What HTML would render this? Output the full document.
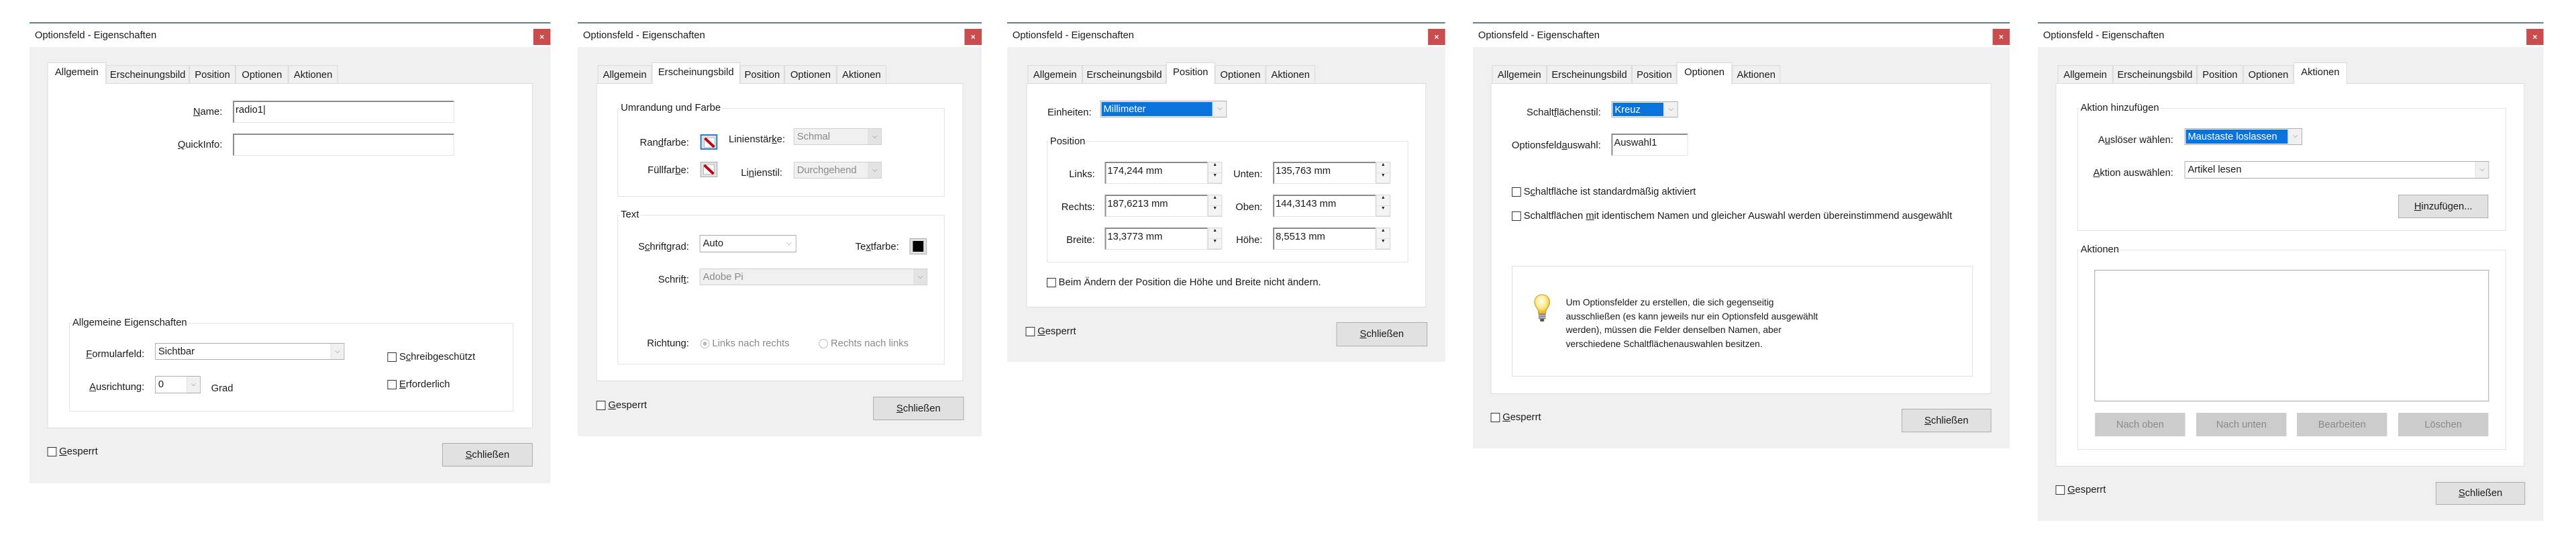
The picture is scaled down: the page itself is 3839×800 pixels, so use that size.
<!DOCTYPE html>
<html><head><meta charset="utf-8">
<style>
*{box-sizing:border-box;margin:0;padding:0}
body{width:3839px;height:800px;background:#fff;position:relative;overflow:hidden;font-family:"Liberation Sans",sans-serif;font-size:15px;color:#1a1a1a}
.dlg{position:absolute;top:0;height:800px;transform-origin:0 0}
.top{position:absolute;left:0;right:0;top:33px;height:2px;background:#5f8585}
.tb{position:absolute;left:0;right:0;top:35px;height:35px;background:#fff}
.body{position:absolute;left:0;right:0;top:70px;background:#f0f0f0}
.title{position:absolute;left:8px;top:44px;font-size:15px;white-space:nowrap}
.cls{position:absolute;top:43px;width:26px;height:24px;background:#c94c4f;color:#fff;font-size:12px;text-align:center;line-height:24px;font-weight:bold}
.tab{position:absolute;top:97px;height:27px;background:#f0f0f0;border:1px solid #dadada;border-bottom:none;text-align:center;line-height:27px;white-space:nowrap}
.tab.a{top:93px;height:32px;background:#fff;line-height:28px;z-index:2}
.panel{position:absolute;top:124px;background:#fff;border:1px solid #dcdcdc}
.grp{position:absolute;border:1px solid #e2e2e2}
.leg{position:absolute;background:#fff;padding:0 2px;white-space:nowrap;line-height:18px}
.l{position:absolute;white-space:nowrap;line-height:18px;margin-top:-9px}
.r{text-align:right}
.inp{position:absolute;background:#fff;border:1px solid #e3e3e3;border-top:2px solid #8a8a8a;border-left:2px solid #8a8a8a;padding-left:2px;line-height:24px;white-space:nowrap}
.sel{position:absolute;background:#fff;border:1px solid #adadad;padding-left:4px;white-space:nowrap}
.sel .ar{position:absolute;right:0;top:0;bottom:0;width:20px;background:#f0f0f0;border-left:1px solid #e0e0e0;text-align:center;font-size:10px;color:#777}
.dis{background:#f0f0f0;color:#8a8a8a;border-color:#cfcfcf}
.dis .ar{background:#e3e3e3}
.hl{position:absolute;left:1px;top:1px;bottom:1px;background:#0a74da;color:#fff;padding-left:3px}
.cb{position:absolute;width:14px;height:14px;border:1px solid #333;background:#fff;margin-top:-7px}
.btn{position:absolute;background:#e1e1e1;border:1px solid #adadad;text-align:center;white-space:nowrap}
.btn.g{background:#cccccc;border-color:#cccccc;color:#8a8a8a}
.sp{position:absolute;width:22px;background:#f4f4f4;border:1px solid #d6d6d6}
.sp div{height:50%;text-align:center;font-size:7px;color:#222;border-bottom:1px solid #e0e0e0}
.sw{position:absolute;width:26px;height:23px;border:1px solid #adadad;background:#e1e1e1}
.sw svg{position:absolute;left:4px;top:3px}
.rad{position:absolute;width:14px;height:14px;border:1px solid #bbb;border-radius:50%;background:#fff;margin-top:-7px}
</style></head><body>

<!-- Dialog 1 -->
<div class="dlg" style="left:44px;width:789px;transform:scaleX(0.984)">
<div class="top"></div><div class="tb"></div><div class="body" style="height:650px"></div>
<div class="title">Optionsfeld - Eigenschaften</div>
<div class="cls" style="left:763px">×</div>
<div class="panel" style="left:27px;width:735px;height:514px"></div>
<div class="tab a" style="left:27px;width:89px">Allgemein</div>
<div class="tab" style="left:116px;width:126px">Erscheinungsbild</div>
<div class="tab" style="left:242px;width:70px">Position</div>
<div class="tab" style="left:312px;width:80px">Optionen</div>
<div class="tab" style="left:392px;width:75px">Aktionen</div>
<div class="l r" style="right:497px;top:167px"><u>N</u>ame:</div>
<div class="inp" style="left:308px;top:150px;width:335px;height:33px">radio1|</div>
<div class="l r" style="right:497px;top:216px"><u>Q</u>uickInfo:</div>
<div class="inp" style="left:308px;top:199px;width:335px;height:33px"></div>
<div class="grp" style="left:60px;top:481px;width:673px;height:132px"></div>
<div class="leg" style="left:63px;top:472px">Allgemeine Eigenschaften</div>
<div class="l r" style="right:615px;top:528px"><u>F</u>ormularfeld:</div>
<div class="sel" style="left:190px;top:511px;width:287px;height:25px;line-height:23px">Sichtbar<div class="ar">⌵</div></div>
<div class="l r" style="right:615px;top:577px"><u>A</u>usrichtung:</div>
<div class="sel" style="left:190px;top:560px;width:69px;height:26px;line-height:24px">0<div class="ar">⌵</div></div>
<div class="l" style="left:275px;top:579px">Grad</div>
<div class="cb" style="left:542px;top:532px"></div><div class="l" style="left:560px;top:532px">S<u>c</u>hreibgeschützt</div>
<div class="cb" style="left:542px;top:573px"></div><div class="l" style="left:560px;top:573px"><u>E</u>rforderlich</div>
<div class="cb" style="left:27px;top:673px"></div><div class="l" style="left:45px;top:673px"><u>G</u>esperrt</div>
<div class="btn" style="left:625px;top:660px;width:137px;height:35px;line-height:33px"><u>S</u>chließen</div>
</div>

<!-- Dialog 2 -->
<div class="dlg" style="left:861px;width:610px;transform:scaleX(0.987)">
<div class="top"></div><div class="tb"></div><div class="body" style="height:580px"></div>
<div class="title">Optionsfeld - Eigenschaften</div>
<div class="cls" style="left:584px">×</div>
<div class="panel" style="left:28px;width:554px;height:444px"></div>
<div class="tab" style="left:30px;width:82px">Allgemein</div>
<div class="tab a" style="left:112px;width:133px">Erscheinungsbild</div>
<div class="tab" style="left:245px;width:67px">Position</div>
<div class="tab" style="left:312px;width:79px">Optionen</div>
<div class="tab" style="left:391px;width:75px">Aktionen</div>
<div class="grp" style="left:60px;top:161px;width:494px;height:132px"></div>
<div class="leg" style="left:63px;top:152px">Umrandung und Farbe</div>
<div class="l r" style="right:442px;top:213px">Ran<u>d</u>farbe:</div>
<div class="sw" style="left:185px;top:200px;border:2px solid #2f7fd0"><svg width="16" height="15"><rect x="0" y="0" width="16" height="15" fill="#fff" stroke="#888"/><line x1="1" y1="1" x2="15" y2="14" stroke="#c00010" stroke-width="4"/></svg></div>
<div class="l" style="left:228px;top:208px">Linienstär<u>k</u>e:</div>
<div class="sel dis" style="left:326px;top:191px;width:133px;height:25px;line-height:23px">Schmal<div class="ar">⌵</div></div>
<div class="l r" style="right:442px;top:254px">Füllfar<u>b</u>e:</div>
<div class="sw" style="left:185px;top:241px"><svg width="16" height="15"><rect x="0" y="0" width="16" height="15" fill="#fff" stroke="#888"/><line x1="1" y1="1" x2="15" y2="14" stroke="#c00010" stroke-width="4"/></svg></div>
<div class="l r" style="right:301px;top:258px">Li<u>n</u>ienstil:</div>
<div class="sel dis" style="left:326px;top:241px;width:133px;height:25px;line-height:23px">Durchgehend<div class="ar">⌵</div></div>
<div class="grp" style="left:60px;top:320px;width:494px;height:223px"></div>
<div class="leg" style="left:63px;top:311px">Text</div>
<div class="l r" style="right:442px;top:368px">S<u>c</u>hriftgrad:</div>
<div class="sel" style="left:184px;top:350px;width:146px;height:26px;line-height:24px;border-color:#aaa">Auto<div class="ar" style="background:#fff;border:none">⌵</div></div>
<div class="l r" style="right:125px;top:368px">Te<u>x</u>tfarbe:</div>
<div class="sw" style="left:501px;top:355px;height:24px"><div style="position:absolute;left:4px;top:3px;width:16px;height:16px;background:#000"></div></div>
<div class="l r" style="right:442px;top:417px">Schrif<u>t</u>:</div>
<div class="sel dis" style="left:184px;top:400px;width:344px;height:25px;line-height:23px">Adobe Pi<div class="ar">⌵</div></div>
<div class="l r" style="right:442px;top:512px">Richtung:</div>
<div class="rad" style="left:185px;top:512px"><div style="position:absolute;left:3px;top:3px;width:6px;height:6px;border-radius:50%;background:#bbb"></div></div>
<div class="l" style="left:203px;top:512px;color:#8a8a8a">Links nach rechts</div>
<div class="rad" style="left:364px;top:512px"></div>
<div class="l" style="left:382px;top:512px;color:#8a8a8a">Rechts nach links</div>
<div class="cb" style="left:28px;top:604px"></div><div class="l" style="left:46px;top:604px"><u>G</u>esperrt</div>
<div class="btn" style="left:446px;top:591px;width:137px;height:35px;line-height:33px"><u>S</u>chließen</div>
</div>

<!-- Dialog 3 -->
<div class="dlg" style="left:1501px;width:664px;transform:scaleX(0.983)">
<div class="top"></div><div class="tb"></div><div class="body" style="height:469px"></div>
<div class="title">Optionsfeld - Eigenschaften</div>
<div class="cls" style="left:638px">×</div>
<div class="panel" style="left:29px;width:606px;height:334px"></div>
<div class="tab" style="left:31px;width:83px">Allgemein</div>
<div class="tab" style="left:114px;width:127px">Erscheinungsbild</div>
<div class="tab a" style="left:241px;width:74px">Position</div>
<div class="tab" style="left:315px;width:77px">Optionen</div>
<div class="tab" style="left:392px;width:75px">Aktionen</div>
<div class="l" style="left:61px;top:168px">Einheiten:</div>
<div class="sel" style="left:141px;top:150px;width:192px;height:25px;line-height:22px"><div class="hl" style="width:168px">Millimeter</div><div class="ar">⌵</div></div>
<div class="grp" style="left:60px;top:210px;width:548px;height:181px"></div>
<div class="leg" style="left:63px;top:202px">Position</div>
<div class="l r" style="right:531px;top:260px">Links:</div>
<div class="inp" style="left:148px;top:241px;width:156px;height:33px">174,244 mm</div>
<div class="sp" style="left:304px;top:241px;height:33px"><div>▲</div><div>▼</div></div>
<div class="l r" style="right:277px;top:260px">Unten:</div>
<div class="inp" style="left:403px;top:241px;width:156px;height:33px">135,763 mm</div>
<div class="sp" style="left:559px;top:241px;height:33px"><div>▲</div><div>▼</div></div>
<div class="l r" style="right:531px;top:309px">Rechts:</div>
<div class="inp" style="left:148px;top:290px;width:156px;height:33px">187,6213 mm</div>
<div class="sp" style="left:304px;top:290px;height:33px"><div>▲</div><div>▼</div></div>
<div class="l r" style="right:277px;top:309px">Oben:</div>
<div class="inp" style="left:403px;top:290px;width:156px;height:33px">144,3143 mm</div>
<div class="sp" style="left:559px;top:290px;height:33px"><div>▲</div><div>▼</div></div>
<div class="l r" style="right:531px;top:358px">Breite:</div>
<div class="inp" style="left:148px;top:339px;width:156px;height:33px">13,3773 mm</div>
<div class="sp" style="left:304px;top:339px;height:33px"><div>▲</div><div>▼</div></div>
<div class="l r" style="right:277px;top:358px">Höhe:</div>
<div class="inp" style="left:403px;top:339px;width:156px;height:33px">8,5513 mm</div>
<div class="sp" style="left:559px;top:339px;height:33px"><div>▲</div><div>▼</div></div>
<div class="cb" style="left:60px;top:421px"></div><div class="l" style="left:78px;top:421px">Beim Ändern der Position die Höhe und Breite nicht ändern.</div>
<div class="cb" style="left:28px;top:494px"></div><div class="l" style="left:46px;top:494px"><u>G</u>esperrt</div>
<div class="btn" style="left:499px;top:480px;width:138px;height:36px;line-height:34px"><u>S</u>chließen</div>
</div>

<!-- Dialog 4 -->
<div class="dlg" style="left:2195px;width:814px;transform:scaleX(0.983)">
<div class="top"></div><div class="tb"></div><div class="body" style="height:598px"></div>
<div class="title">Optionsfeld - Eigenschaften</div>
<div class="cls" style="left:788px">×</div>
<div class="panel" style="left:27px;width:759px;height:463px"></div>
<div class="tab" style="left:29px;width:83px">Allgemein</div>
<div class="tab" style="left:112px;width:129px">Erscheinungsbild</div>
<div class="tab" style="left:241px;width:68px">Position</div>
<div class="tab a" style="left:309px;width:84px">Optionen</div>
<div class="tab" style="left:393px;width:73px">Aktionen</div>
<div class="l r" style="right:620px;top:168px">Schalt<u>f</u>lächenstil:</div>
<div class="sel" style="left:210px;top:151px;width:101px;height:24px;line-height:21px"><div class="hl" style="width:77px">Kreuz</div><div class="ar">⌵</div></div>
<div class="l r" style="right:620px;top:217px">Optionsfeld<u>a</u>uswahl:</div>
<div class="inp" style="left:210px;top:199px;width:116px;height:33px">Auswahl1</div>
<div class="cb" style="left:59px;top:286px"></div><div class="l" style="left:77px;top:286px">S<u>c</u>haltfläche ist standardmäßig aktiviert</div>
<div class="cb" style="left:59px;top:322px"></div><div class="l" style="left:77px;top:322px">Schaltflächen <u>m</u>it identischem Namen und gleicher Auswahl werden übereinstimmend ausgewählt</div>
<div style="position:absolute;left:59px;top:396px;width:699px;height:165px;border:1px solid #e0e0e0;background:#fff"></div>
<svg style="position:absolute;left:92px;top:438px" width="26" height="42" viewBox="0 0 26 42"><defs><radialGradient id="bg" cx="0.45" cy="0.35" r="0.6"><stop offset="0" stop-color="#fffef0"/><stop offset="0.6" stop-color="#fde98a"/><stop offset="1" stop-color="#e6b422"/></radialGradient></defs><path d="M13 1C6 1 1.5 6 1.5 12.5c0 5 3.5 8 5 11 1 2 1 4 1 6h11c0-2 0-4 1-6 1.5-3 5-6 5-11C24.5 6 20 1 13 1z" fill="url(#bg)" stroke="#c89a1e" stroke-width="1"/><rect x="7.5" y="29.5" width="11" height="8" rx="1.5" fill="#8a8a8a"/><line x1="7.5" y1="32" x2="18.5" y2="32" stroke="#ccc"/><line x1="7.5" y1="35" x2="18.5" y2="35" stroke="#ccc"/><rect x="10" y="37" width="6" height="4" rx="1.5" fill="#555"/></svg>
<div style="position:absolute;left:141px;top:440px;line-height:20.7px;font-size:14px;white-space:nowrap">Um Optionsfelder zu erstellen, die sich gegenseitig<br>ausschließen (es kann jeweils nur ein Optionsfeld ausgewählt<br>werden), müssen die Felder denselben Namen, aber<br>verschiedene Schaltflächenauswahlen besitzen.</div>
<div class="cb" style="left:27px;top:622px"></div><div class="l" style="left:45px;top:622px"><u>G</u>esperrt</div>
<div class="btn" style="left:650px;top:609px;width:136px;height:35px;line-height:33px"><u>S</u>chließen</div>
</div>

<!-- Dialog 5 -->
<div class="dlg" style="left:3037px;width:769px;transform:scaleX(0.98)">
<div class="top"></div><div class="tb"></div><div class="body" style="height:706px"></div>
<div class="title">Optionsfeld - Eigenschaften</div>
<div class="cls" style="left:743px">×</div>
<div class="panel" style="left:27px;width:713px;height:571px"></div>
<div class="tab" style="left:30px;width:84px">Allgemein</div>
<div class="tab" style="left:114px;width:128px">Erscheinungsbild</div>
<div class="tab" style="left:242px;width:70px">Position</div>
<div class="tab" style="left:312px;width:77px">Optionen</div>
<div class="tab a" style="left:389px;width:81px">Aktionen</div>
<div class="grp" style="left:60px;top:161px;width:652px;height:183px"></div>
<div class="leg" style="left:63px;top:152px">Aktion hinzufügen</div>
<div class="l r" style="right:563px;top:209px">A<u>u</u>slöser wählen:</div>
<div class="sel" style="left:223px;top:191px;width:179px;height:25px;line-height:22px"><div class="hl" style="width:155px">Maustaste loslassen</div><div class="ar">⌵</div></div>
<div class="l r" style="right:563px;top:258px"><u>A</u>ktion auswählen:</div>
<div class="sel" style="left:223px;top:240px;width:463px;height:26px;line-height:24px">Artikel lesen<div class="ar">⌵</div></div>
<div class="btn" style="left:548px;top:290px;width:137px;height:35px;line-height:33px"><u>H</u>inzufügen...</div>
<div class="grp" style="left:60px;top:372px;width:652px;height:298px"></div>
<div class="leg" style="left:63px;top:363px">Aktionen</div>
<div style="position:absolute;left:86px;top:402px;width:600px;height:196px;border:1px solid #a8a8a8;background:#fff"></div>
<div class="btn g" style="left:87px;top:615px;width:137px;height:35px;line-height:33px">Nach oben</div>
<div class="btn g" style="left:241px;top:615px;width:137px;height:35px;line-height:33px">Nach unten</div>
<div class="btn g" style="left:394px;top:615px;width:137px;height:35px;line-height:33px">Bearbeiten</div>
<div class="btn g" style="left:548px;top:615px;width:137px;height:35px;line-height:33px">Löschen</div>
<div class="cb" style="left:27px;top:730px"></div><div class="l" style="left:45px;top:730px"><u>G</u>esperrt</div>
<div class="btn" style="left:605px;top:718px;width:136px;height:34px;line-height:32px"><u>S</u>chließen</div>
</div>

</body></html>
